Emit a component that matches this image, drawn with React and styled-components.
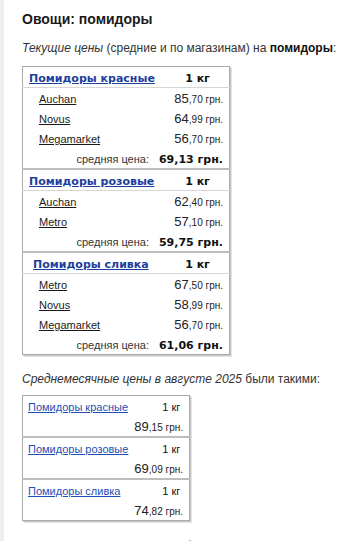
import React from 'react'
import styled, { createGlobalStyle } from 'styled-components'

const GlobalStyle = createGlobalStyle`
  body {
    margin: 0;
    background: #fff;
    font-family: "Liberation Sans", Arial, sans-serif;
    color: #222;
  }
`

const Page = styled.div`
  display: flex;
  min-height: 541px;
`

const Strip = styled.div`
  width: 4px;
  flex-shrink: 0;
  background: #eceef1;
`

const Content = styled.div`
  padding: 10px 0 0 18px;
  flex: 1;
`

const Title = styled.h2`
  margin: 0;
  font-size: 14px;
  font-weight: bold;
  color: #1a1a1a;
  line-height: 18px;
`

const Lead = styled.p`
  margin: ${p => p.top || 12}px 0 ${p => p.bottom || 10}px;
  font-size: 12px;
  line-height: 16px;
  color: #333;
  em { font-style: italic; }
  b { color: #111; }
`

const Table = styled.table`
  border-collapse: collapse;
  width: ${p => p.width}px;
  border: 1px solid #aaa;
  box-shadow: 1px 1px 0 #c8c8c8, 2px 2px 0 #e2e2e2;
`

const Cell = styled.td`
  height: ${p => p.h || 20}px;
  padding: 0 6px 0 ${p => p.indent || 6}px;
  text-align: ${p => p.align || 'left'};
  vertical-align: middle;
  white-space: nowrap;
`

const GroupRow = styled.tr`
  border-top: ${p => (p.first ? 'none' : '2px solid #bdbdbd')};
  border-bottom: ${p => (p.line ? '1px solid #d6d6d6' : 'none')};
`

const HeadLink = styled.a`
  font-family: "DejaVu Sans", Verdana, sans-serif;
  font-weight: bold;
  font-size: 11px;
  color: #1d3f9c;
  text-decoration: underline;
`

const Unit = styled.span`
  font-family: "DejaVu Sans", Verdana, sans-serif;
  font-weight: bold;
  font-size: 11px;
  color: #111;
`

const Shop = styled.a`
  font-size: 11px;
  color: #1a1a1a;
  text-decoration: underline;
`

const Price = styled.span`
  font-size: 13px;
  color: #222;
  small {
    font-size: 10px;
  }
`

const AvgLabel = styled.span`
  font-size: 11px;
  color: #333;
  margin-right: 10px;
`

const AvgValue = styled.span`
  font-family: "DejaVu Sans", Verdana, sans-serif;
  font-weight: bold;
  font-size: 11px;
  color: #111;
`

const MonthLink = styled.a`
  font-size: 11px;
  color: #1d4fb5;
  text-decoration: underline;
`

const MonthUnit = styled.span`
  font-size: 11px;
  color: #111;
`

const Next = styled.h3`
  margin: 16px 0 0;
  font-size: 14px;
  font-weight: bold;
  line-height: 18px;
  color: #222;
`

const groups = [
  {
    name: 'Помидоры красные',
    pad: 6,
    shops: [
      ['Auchan', '85', '70'],
      ['Novus', '64', '99'],
      ['Megamarket', '56', '70'],
    ],
    avg: '69,13',
  },
  {
    name: 'Помидоры розовые',
    pad: 6,
    shops: [
      ['Auchan', '62', '40'],
      ['Metro', '57', '10'],
    ],
    avg: '59,75',
  },
  {
    name: 'Помидоры сливка',
    pad: 10,
    shops: [
      ['Metro', '67', '50'],
      ['Novus', '58', '99'],
      ['Megamarket', '56', '70'],
    ],
    avg: '61,06',
  },
]

const monthly = [
  ['Помидоры красные', '89', '15'],
  ['Помидоры розовые', '69', '09'],
  ['Помидоры сливка', '74', '82'],
]

const PriceText = ({ whole, cents }) => (
  <Price>
    {whole}
    <small>,{cents} грн.</small>
  </Price>
)

const App = () => {
  return (
    <Page>
      <GlobalStyle />
      <Strip />
      <Content>
        <Title>Овощи: помидоры</Title>
        <Lead>
          <em>Текущие цены</em> (средние и по магазинам) на <b>помидоры</b>:
        </Lead>
        <Table width={208}>
          <tbody>
            {groups.map((g, gi) => (
              <React.Fragment key={g.name}>
                <GroupRow first={gi === 0} line>
                  <Cell indent={g.pad}>
                    <HeadLink href="#">{g.name}</HeadLink>
                  </Cell>
                  <Cell align="center">
                    <Unit>1 кг</Unit>
                  </Cell>
                </GroupRow>
                {g.shops.map(s => (
                  <tr key={s[0]}>
                    <Cell indent={16}>
                      <Shop href="#">{s[0]}</Shop>
                    </Cell>
                    <Cell align="right">
                      <PriceText whole={s[1]} cents={s[2]} />
                    </Cell>
                  </tr>
                ))}
                <tr>
                  <Cell colSpan={2} align="right">
                    <AvgLabel>средняя цена:</AvgLabel>
                    <AvgValue>{g.avg} грн.</AvgValue>
                  </Cell>
                </tr>
              </React.Fragment>
            ))}
          </tbody>
        </Table>
        <Lead top={16} bottom={8}>
          <em>Среднемесячные цены в августе 2025</em> были такими:
        </Lead>
        <Table width={168}>
          <tbody>
            {monthly.map((m, i) => (
              <React.Fragment key={m[0]}>
                <GroupRow first={i === 0}>
                  <Cell indent={5}>
                    <MonthLink href="#">{m[0]}</MonthLink>
                  </Cell>
                  <Cell align="center">
                    <MonthUnit>1 кг</MonthUnit>
                  </Cell>
                </GroupRow>
                <tr>
                  <Cell colSpan={2} align="right">
                    <PriceText whole={m[1]} cents={m[2]} />
                  </Cell>
                </tr>
              </React.Fragment>
            ))}
          </tbody>
        </Table>
        <Next>Цены на помидоры в обзоре за неделю</Next>
      </Content>
    </Page>
  )
}

export default App
